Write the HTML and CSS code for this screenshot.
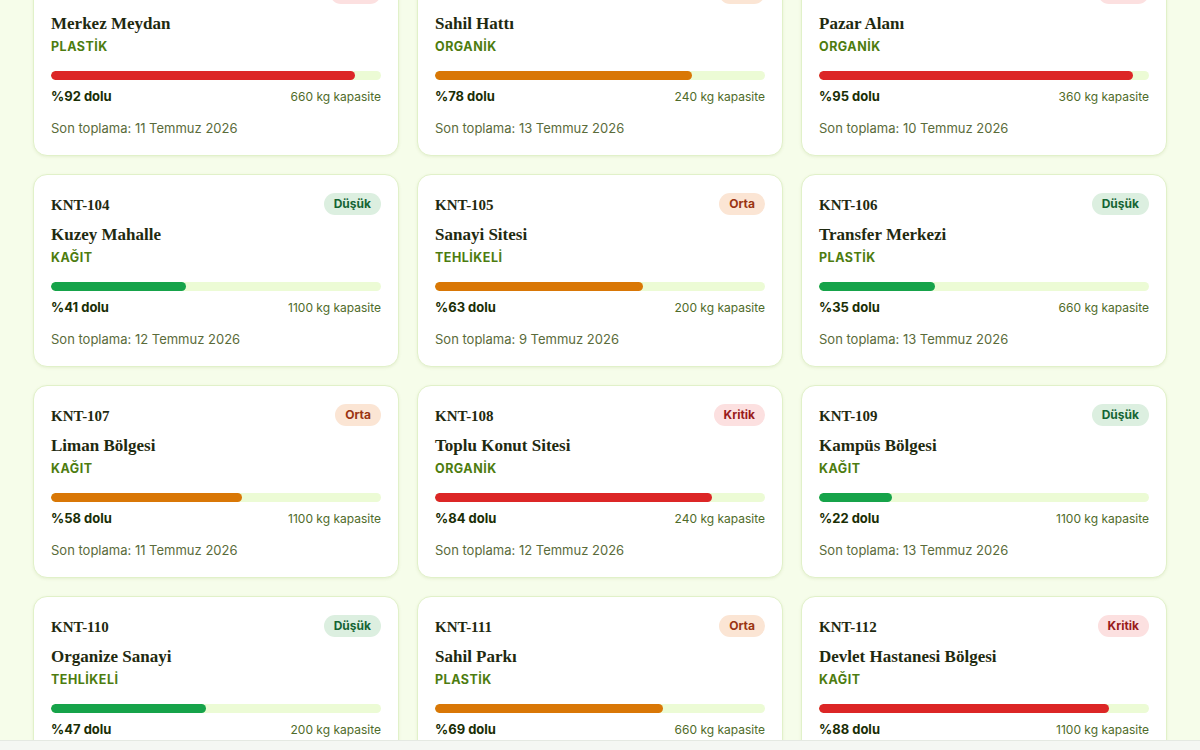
FILE: index.html
```html
<!DOCTYPE html>
<html lang="tr">
<head>
<meta charset="utf-8">
<title>Konteynerler</title>
<link rel="stylesheet" href="styles.css">
</head>
<body>
<main class="grid">
  <article class="card">
    <div class="head"><span class="code">KNT-101</span><span class="badge crit">Kritik</span></div>
    <h3 class="name">Merkez Meydan</h3>
    <div class="type">PLASTİK</div>
    <div class="track"><div class="fill red" style="width:92%"></div></div>
    <div class="stats"><span class="pct">%92 dolu</span><span class="cap">660 kg kapasite</span></div>
    <div class="last">Son toplama: 11 Temmuz 2026</div>
  </article>
  <article class="card">
    <div class="head"><span class="code">KNT-102</span><span class="badge mid">Orta</span></div>
    <h3 class="name">Sahil Hattı</h3>
    <div class="type">ORGANİK</div>
    <div class="track"><div class="fill orange" style="width:78%"></div></div>
    <div class="stats"><span class="pct">%78 dolu</span><span class="cap">240 kg kapasite</span></div>
    <div class="last">Son toplama: 13 Temmuz 2026</div>
  </article>
  <article class="card">
    <div class="head"><span class="code">KNT-103</span><span class="badge crit">Kritik</span></div>
    <h3 class="name">Pazar Alanı</h3>
    <div class="type">ORGANİK</div>
    <div class="track"><div class="fill red" style="width:95%"></div></div>
    <div class="stats"><span class="pct">%95 dolu</span><span class="cap">360 kg kapasite</span></div>
    <div class="last">Son toplama: 10 Temmuz 2026</div>
  </article>

  <article class="card">
    <div class="head"><span class="code">KNT-104</span><span class="badge low">Düşük</span></div>
    <h3 class="name">Kuzey Mahalle</h3>
    <div class="type">KAĞIT</div>
    <div class="track"><div class="fill green" style="width:41%"></div></div>
    <div class="stats"><span class="pct">%41 dolu</span><span class="cap">1100 kg kapasite</span></div>
    <div class="last">Son toplama: 12 Temmuz 2026</div>
  </article>
  <article class="card">
    <div class="head"><span class="code">KNT-105</span><span class="badge mid">Orta</span></div>
    <h3 class="name">Sanayi Sitesi</h3>
    <div class="type">TEHLİKELİ</div>
    <div class="track"><div class="fill orange" style="width:63%"></div></div>
    <div class="stats"><span class="pct">%63 dolu</span><span class="cap">200 kg kapasite</span></div>
    <div class="last">Son toplama: 9 Temmuz 2026</div>
  </article>
  <article class="card">
    <div class="head"><span class="code">KNT-106</span><span class="badge low">Düşük</span></div>
    <h3 class="name">Transfer Merkezi</h3>
    <div class="type">PLASTİK</div>
    <div class="track"><div class="fill green" style="width:35%"></div></div>
    <div class="stats"><span class="pct">%35 dolu</span><span class="cap">660 kg kapasite</span></div>
    <div class="last">Son toplama: 13 Temmuz 2026</div>
  </article>

  <article class="card">
    <div class="head"><span class="code">KNT-107</span><span class="badge mid">Orta</span></div>
    <h3 class="name">Liman Bölgesi</h3>
    <div class="type">KAĞIT</div>
    <div class="track"><div class="fill orange" style="width:58%"></div></div>
    <div class="stats"><span class="pct">%58 dolu</span><span class="cap">1100 kg kapasite</span></div>
    <div class="last">Son toplama: 11 Temmuz 2026</div>
  </article>
  <article class="card">
    <div class="head"><span class="code">KNT-108</span><span class="badge crit">Kritik</span></div>
    <h3 class="name">Toplu Konut Sitesi</h3>
    <div class="type">ORGANİK</div>
    <div class="track"><div class="fill red" style="width:84%"></div></div>
    <div class="stats"><span class="pct">%84 dolu</span><span class="cap">240 kg kapasite</span></div>
    <div class="last">Son toplama: 12 Temmuz 2026</div>
  </article>
  <article class="card">
    <div class="head"><span class="code">KNT-109</span><span class="badge low">Düşük</span></div>
    <h3 class="name">Kampüs Bölgesi</h3>
    <div class="type">KAĞIT</div>
    <div class="track"><div class="fill green" style="width:22%"></div></div>
    <div class="stats"><span class="pct">%22 dolu</span><span class="cap">1100 kg kapasite</span></div>
    <div class="last">Son toplama: 13 Temmuz 2026</div>
  </article>

  <article class="card">
    <div class="head"><span class="code">KNT-110</span><span class="badge low">Düşük</span></div>
    <h3 class="name">Organize Sanayi</h3>
    <div class="type">TEHLİKELİ</div>
    <div class="track"><div class="fill green" style="width:47%"></div></div>
    <div class="stats"><span class="pct">%47 dolu</span><span class="cap">200 kg kapasite</span></div>
    <div class="last">Son toplama: 14 Temmuz 2026</div>
  </article>
  <article class="card">
    <div class="head"><span class="code">KNT-111</span><span class="badge mid">Orta</span></div>
    <h3 class="name">Sahil Parkı</h3>
    <div class="type">PLASTİK</div>
    <div class="track"><div class="fill orange" style="width:69%"></div></div>
    <div class="stats"><span class="pct">%69 dolu</span><span class="cap">660 kg kapasite</span></div>
    <div class="last">Son toplama: 12 Temmuz 2026</div>
  </article>
  <article class="card">
    <div class="head"><span class="code">KNT-112</span><span class="badge crit">Kritik</span></div>
    <h3 class="name">Devlet Hastanesi Bölgesi</h3>
    <div class="type">KAĞIT</div>
    <div class="track"><div class="fill red" style="width:88%"></div></div>
    <div class="stats"><span class="pct">%88 dolu</span><span class="cap">1100 kg kapasite</span></div>
    <div class="last">Son toplama: 11 Temmuz 2026</div>
  </article>
</main>
<div class="bottombar"></div>
</body>
</html>
```
FILE: styles.css
```css
html, body {
  margin: 0;
  padding: 0;
  background: #f6fdea;
  font-family: Inter, "Noto Sans", "Liberation Sans", sans-serif;
  color: #1a2e05;
  overflow: hidden;
  height: 750px;
}

.grid {
  display: grid;
  grid-template-columns: repeat(3, 366px);
  column-gap: 18px;
  row-gap: 18px;
  padding: 0 33px;
  margin-top: -37px;
}

.card {
  box-sizing: border-box;
  height: 193px;
  background: #ffffff;
  border: 1px solid #e1f1c9;
  border-radius: 14px;
  padding: 18px 17px 18px 17px;
  box-shadow: 0 1px 3px rgba(120, 150, 60, 0.12);
  display: flex;
  flex-direction: column;
}

.head {
  display: flex;
  justify-content: space-between;
  align-items: center;
  height: 22px;
}

.code {
  font-family: "Liberation Serif", "DejaVu Serif", serif;
  font-size: 15px;
  font-weight: 600;
  color: #1f2a10;
  padding-top: 2px;
}

.badge {
  font-size: 12px;
  font-weight: 700;
  line-height: 22px;
  height: 22px;
  padding: 0 10px;
  border-radius: 11px;
}

.badge.low { background: #dcefe0; color: #166534; }
.badge.mid { background: #fbe5d4; color: #9a3412; }
.badge.crit { background: #fce0e0; color: #991b1b; }

.name {
  margin: 9px 0 0 0;
  font-family: "Liberation Serif", "DejaVu Serif", serif;
  font-size: 17px;
  font-weight: 600;
  line-height: 22px;
  color: #1f2a10;
}

.type {
  margin-top: 4px;
  font-size: 12.5px;
  font-weight: 700;
  line-height: 16px;
  letter-spacing: 0.04em;
  color: #4d7c0f;
}

.track {
  margin-top: 16px;
  height: 10px;
  background: #ecfbd5;
  border-radius: 5px;
  overflow: hidden;
}

.fill {
  height: 100%;
  border-radius: 5px;
}

.fill.red { background: #dc2626; }
.fill.orange { background: #d97706; }
.fill.green { background: #16a34a; }

.stats {
  margin-top: 7px;
  display: flex;
  justify-content: space-between;
  align-items: baseline;
  line-height: 18px;
}

.pct {
  font-size: 13px;
  font-weight: 700;
  color: #1a2e05;
}

.cap {
  font-size: 12px;
  color: #4f6b2a;
}

.last {
  margin-top: 13px;
  font-size: 13px;
  line-height: 18px;
  color: #5a6b3a;
}

.bottombar {
  position: fixed;
  left: 0;
  right: 0;
  bottom: 0;
  height: 9px;
  background: #f4f7f3;
  border-top: 1px solid #e4e9e2;
}
```
